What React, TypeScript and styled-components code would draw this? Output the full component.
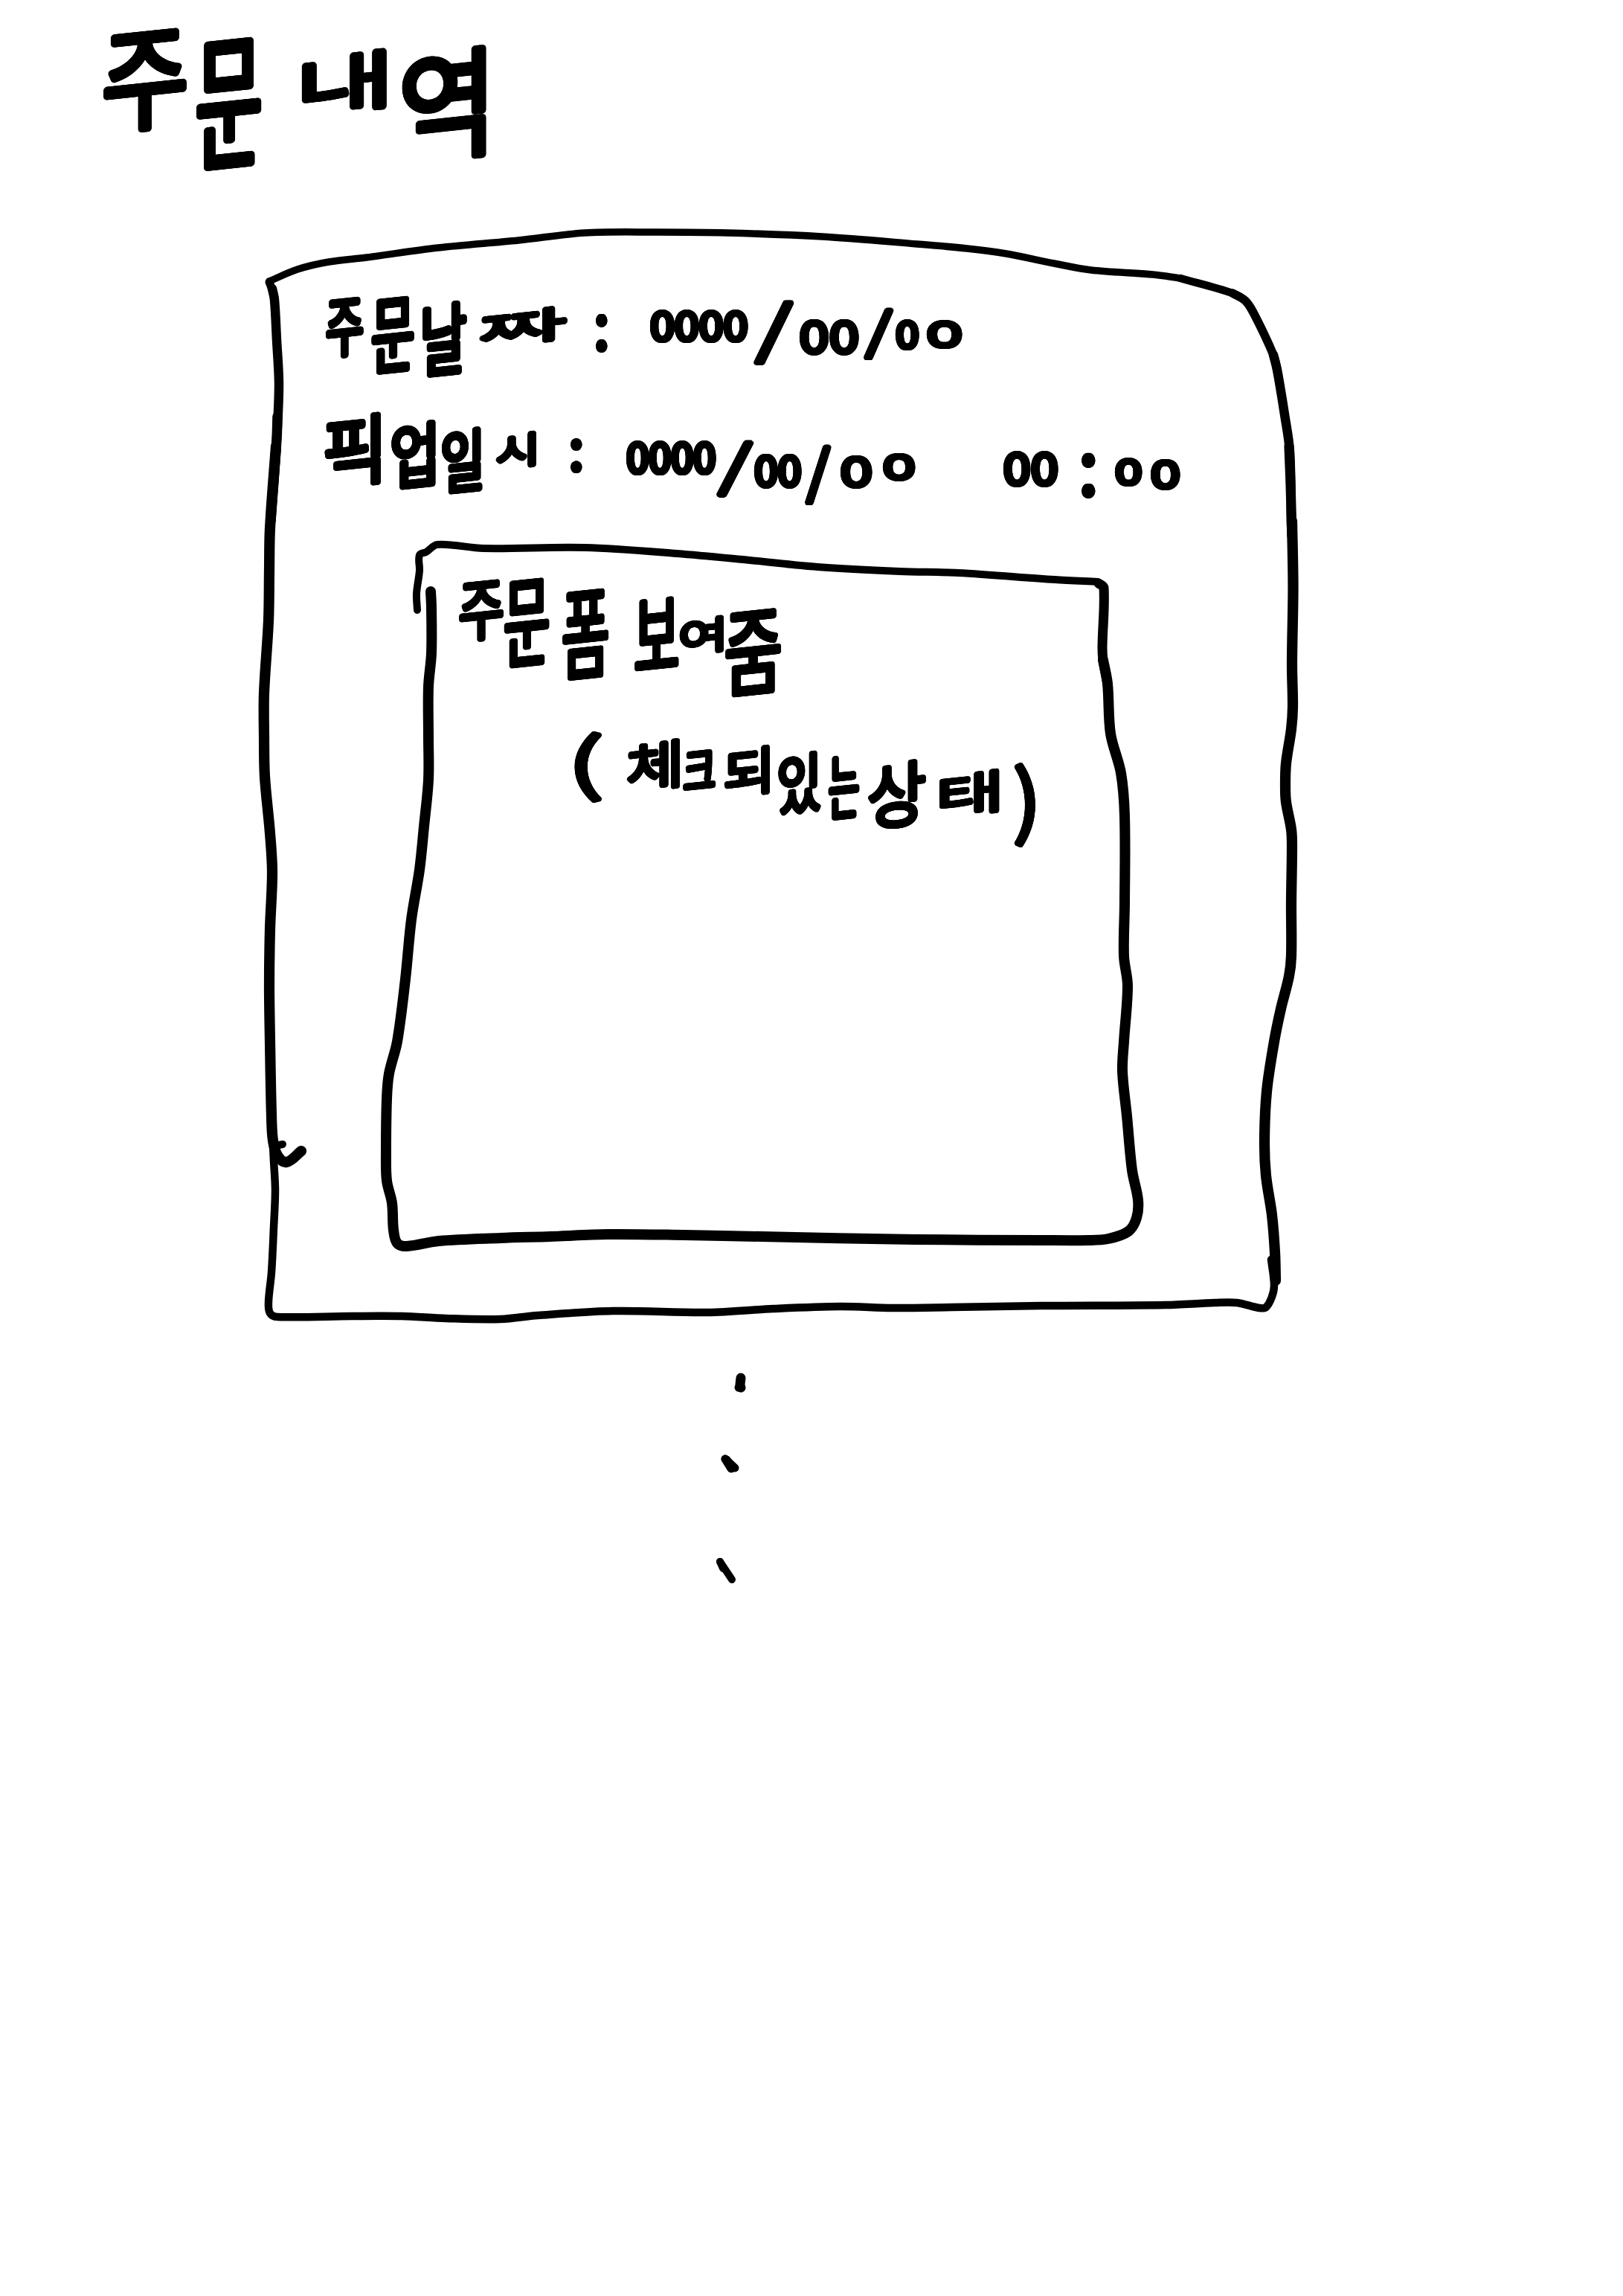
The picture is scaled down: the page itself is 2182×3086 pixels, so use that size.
import React from "react";
import styled, { createGlobalStyle } from "styled-components";

const INK = "#000";
const FACE = '"Noto Sans CJK KR", "Noto Sans", sans-serif';

const GlobalStyle = createGlobalStyle`
  * { box-sizing: border-box; }
  body { margin: 0; background: #fff; color: ${INK}; font-family: ${FACE}; }
`;

/* ---------- lettering ---------- */

type Mark = { text: string; gap: number; drop: number; w: number; h: number };

const m = (text: string, gap: number, drop: number, w: number, h: number): Mark => ({
  text, gap, drop, w, h,
});

const pen = document.createElement("canvas").getContext("2d")!;

const TILT = 6;
const RISE = Math.tan((TILT * Math.PI) / 180);
const isHangul = (text: string) => /[가-힣]/.test(text);

/* Scales a piece of text so that its ink fills a w x h box, then rounds it
   out to the nib of a marker with a ring of unblurred shadows. */
function fitInk(text: string, w: number, h: number, nib: number) {
  pen.font = `400 100px ${FACE}`;
  const t = pen.measureText(text);
  const left = -t.actualBoundingBoxLeft;
  const inkW = t.actualBoundingBoxRight - left;
  const inkH = t.actualBoundingBoxAscent + t.actualBoundingBoxDescent;
  const k = Math.sqrt((w * h) / (inkW * inkH));
  const sx = w / (inkW * k);
  const sy = h / (inkH * k);
  const size = 100 * k;
  const up = t.fontBoundingBoxAscent * k;
  const down = t.fontBoundingBoxDescent * k;
  const baseline = (size - (up + down)) / 2 + up;
  const top = baseline - t.actualBoundingBoxAscent * k;
  const ring = (r: number, n: number) =>
    Array.from({ length: n }, (_, i) => {
      const a = (i / n) * Math.PI * 2;
      return `${((Math.cos(a) * r) / sx).toFixed(2)}px ${((Math.sin(a) * r) / sy).toFixed(2)}px 0 ${INK}`;
    });
  return {
    fontSize: size,
    textShadow: [...ring(nib, 20), ...ring(nib / 2, 8)].join(", "),
    transform: `translate(${-left * k * sx}px, ${-top * sy}px) scale(${sx}, ${sy})`,
  };
}

const Cell = styled.span<{ $mark: Mark; $nib: number; $lift: number }>`
  flex: none;
  width: ${(p) => p.$mark.w}px;
  height: ${(p) => p.$mark.h}px;
  margin-left: ${(p) => p.$mark.gap}px;
  margin-top: ${(p) => p.$mark.drop}px;
  padding: ${(p) => p.$nib + p.$lift / 2}px ${(p) => p.$nib}px;
  transform: skewY(${(p) => (p.$lift ? -TILT : 0)}deg);
`;

const Letter = styled.span`
  display: block;
  width: max-content;
  line-height: 1;
  font-weight: 400;
  white-space: nowrap;
  transform-origin: 0 0;
`;

const Line = styled.div<{ $height: number; $indent?: number; $after?: number }>`
  display: flex;
  align-items: flex-start;
  height: ${(p) => p.$height}px;
  margin-left: ${(p) => p.$indent ?? 0}px;
  margin-bottom: ${(p) => p.$after ?? 0}px;
`;

function Marks({ items, nib }: { items: Mark[]; nib: number }) {
  return (
    <>
      {items.map((it, i) => {
        const lift = isHangul(it.text) ? it.w * RISE : 0;
        return (
          <Cell key={i} $mark={it} $nib={nib} $lift={lift}>
            <Letter style={fitInk(it.text, it.w - nib * 2, it.h - nib * 2 - lift, nib)}>
              {it.text}
            </Letter>
          </Cell>
        );
      })}
    </>
  );
}

const title = [
  m("주", 0, 0, 112, 151), m("문", 12, 13, 88, 185),
  m("내", 54, 28, 115, 97), m("역", 20, 23, 114, 168),
];
const orderDate = [
  m("주", 0, 2, 51, 88), m("문", 10, 0, 58, 109), m("날", 11, 6, 60, 108),
  m("짜", 15, 13, 121, 62), m(":", 37, 26, 16, 52),
  m("0000", 57, 20, 132, 45), m("/", 7, 7, 55, 88), m("00", 7, 33, 80, 49),
  m("/", 6, 18, 41, 71), m("0", 2, 34, 32, 41), m("0", 10, 35, 48, 38),
];
const pickupTime = [
  m("픽", 0, 0, 77, 109), m("업", 13, 11, 60, 98), m("일", 8, 20, 55, 95),
  m("시", 17, 27, 55, 55), m(":", 46, 38, 16, 47),
  m("0000", 59, 41, 121, 47), m("/", 0, 40, 51, 77), m("00", 0, 58, 64, 47),
  m("/", 4, 46, 36, 82), m("0", 12, 60, 43, 45), m("0", 14, 58, 44, 37),
  m("00", 118, 54, 74, 49), m(":", 31, 57, 19, 61),
  m("0", 26, 64, 37, 38), m("0", 11, 65, 40, 42),
];
const formNote = [
  m("주", 0, 2, 60, 90), m("문", 0, 0, 61, 125), m("폼", 18, 15, 62, 127),
  m("보", 35, 25, 59, 104), m("여", 1, 51, 60, 58), m("줌", 2, 40, 75, 124),
];
const stateNote = [
  m("(", 0, 0, 38, 97), m("체", 32, 10, 72, 77), m("크", 4, 24, 44, 58),
  m("되", 11, 18, 62, 75), m("있", 11, 25, 58, 92), m("는", 9, 31, 42, 92),
  m("상", 11, 36, 79, 101), m("태", 17, 50, 81, 70), m(")", 20, 43, 29, 115),
];

/* ---------- pen strokes ---------- */

type Pt = [number, number];

/* Smooth curve through every point. */
function curve(p: Pt[]) {
  let d = `M${p[0][0]} ${p[0][1]}`;
  for (let i = 0; i < p.length - 1; i++) {
    const a = p[i - 1] ?? p[i];
    const b = p[i];
    const c = p[i + 1];
    const e = p[i + 2] ?? c;
    const reach = Math.hypot(c[0] - b[0], c[1] - b[1]) * 0.33;
    const hb = reach / (Math.hypot(c[0] - a[0], c[1] - a[1]) || 1);
    const hc = reach / (Math.hypot(e[0] - b[0], e[1] - b[1]) || 1);
    d += `C${b[0] + (c[0] - a[0]) * hb} ${b[1] + (c[1] - a[1]) * hb} ${c[0] - (e[0] - b[0]) * hc} ${c[1] - (e[1] - b[1]) * hc} ${c[0]} ${c[1]}`;
  }
  return d;
}

const Drawing = styled.svg`
  position: absolute;
  inset: 0;
  width: 100%;
  height: 100%;
  fill: none;
  stroke: ${INK};
  stroke-linecap: round;
  stroke-linejoin: round;
`;

type Stroke = { width: number; points: Pt[] };

function Sketch({ box, strokes }: { box: string; strokes: Stroke[] }) {
  return (
    <Drawing viewBox={box} aria-hidden="true">
      {strokes.map((s, i) => (
        <path key={i} d={curve(s.points)} strokeWidth={s.width} />
      ))}
    </Drawing>
  );
}

const cardStrokes: Stroke[] = [
  { width: 9.5, points: [[362, 378], [400, 362], [442, 352], [493, 346], [589, 333], [697, 323], [786, 313], [882, 312], [978, 313], [1105, 318], [1233, 328], [1300, 334], [1353, 341], [1417, 354], [1467, 363], [1550, 369], [1587, 374]] },
  { width: 10.5, points: [[1587, 374], [1657, 394], [1674, 404], [1685, 420]] },
  { width: 11.5, points: [[1657, 394], [1674, 404], [1685, 420], [1712, 477], [1717, 497]] },
  { width: 12.5, points: [[1712, 477], [1717, 497], [1727, 557], [1734, 607], [1736, 707]] },
  { width: 13.2, points: [[1733, 600], [1735, 650], [1737, 720]] },
  { width: 14.2, points: [[1737, 700], [1738.5, 789], [1737, 892], [1738, 950], [1736, 980], [1729, 1026], [1728, 1057], [1729, 1078], [1736, 1115], [1737, 1137], [1736, 1213], [1736, 1285], [1733, 1312], [1722, 1356], [1713, 1400], [1703, 1467], [1700, 1533], [1702, 1580], [1710, 1633], [1714, 1683], [1715, 1721]] },
  { width: 10.5, points: [[1709, 1693], [1713, 1727], [1710, 1743], [1702, 1757], [1693, 1758], [1663, 1751], [1633, 1751], [1567, 1754], [1400, 1755], [1280, 1757], [1200, 1758], [1130, 1756], [1040, 1759], [952, 1764], [824, 1762], [723, 1768], [673, 1773], [600, 1772], [540, 1769], [473, 1769], [373, 1770], [363, 1765], [361, 1750], [365, 1710], [368, 1650], [370, 1600], [368, 1560], [367, 1540]] },
  { width: 11, points: [[362, 379], [366, 390], [369, 400]] },
  { width: 12.5, points: [[366, 388], [369, 403], [372, 457], [375, 517], [372, 590], [364, 700]] },
  { width: 13.5, points: [[373, 560], [372, 590], [364, 700]] },
  { width: 14.2, points: [[371, 600], [363, 710], [362, 767], [361, 834], [355, 932], [355, 990], [356, 1044], [363, 1120], [366, 1173], [363, 1249], [362, 1325], [363, 1400], [365, 1500], [367, 1533], [373, 1553], [385, 1562], [405, 1547]] },
  { width: 10, points: [[370, 1540], [380, 1538]] },
];

const formStrokes: Stroke[] = [
  { width: 10, points: [[561, 820], [560, 798], [564, 767], [564, 746], [573, 742], [588, 732], [650, 737], [787, 736], [910, 744], [1008, 753], [1099, 762], [1210, 768], [1288, 770], [1418, 779], [1476, 782]] },
  { width: 13, points: [[1477, 784], [1484, 790], [1482, 870], [1483, 887], [1489, 919]] },
  { width: 14, points: [[1483, 887], [1489, 919], [1493, 986], [1507, 1039], [1512, 1097], [1512, 1213], [1511, 1285], [1516, 1325], [1511, 1400], [1509, 1440], [1515, 1500], [1522, 1573], [1530, 1613], [1528, 1637], [1517, 1655], [1490, 1665], [1463, 1667], [1400, 1667], [1230, 1666], [1023, 1662], [920, 1660], [817, 1659], [740, 1662], [673, 1664], [590, 1668], [547, 1675], [534, 1671], [529, 1653], [527, 1617], [520, 1587], [519, 1550], [520, 1477], [523, 1443], [534, 1400], [545, 1316], [553, 1236], [564, 1169], [570, 1111], [576, 1048], [576, 990], [576, 923], [580, 878], [580, 816], [579, 795]] },
];

const dotStrokes: Stroke[] = [
  { width: 13, points: [[996, 1852], [995, 1862], [996, 1865]] },
  { width: 11, points: [[993, 1865], [996, 1865]] },
  { width: 11, points: [[975, 1961], [983, 1974]] },
  { width: 11, points: [[975, 1961], [988, 1973]] },
  { width: 11, points: [[977, 1962], [985, 1973]] },
  { width: 10, points: [[968, 2099], [984, 2123]] },
  { width: 10, points: [[968, 2099], [972, 2108]] },
];

/* ---------- page ---------- */

const Page = styled.main`
  display: flex;
  flex-direction: column;
  width: 2182px;
  height: 3086px;
  background: #fff;
`;

const Header = styled.h1`
  margin: 0;
  padding: 35px 0 0 139px;
  height: 300px;
  font-size: 100px;
`;

const OrderCard = styled.section`
  position: relative;
  width: 1410px;
  height: 1490px;
  margin-left: 345px;
  padding: 96px 0 0 91px;
`;

const FormPanel = styled.div`
  position: relative;
  width: 1040px;
  height: 970px;
  margin-left: 70px;
  padding: 55px 0 0 111px;
`;

const More = styled.div`
  position: relative;
  width: 60px;
  height: 310px;
  margin: 40px 0 0 950px;
`;

export default function App() {
  return (
    <Page>
      <GlobalStyle />
      <Header>
        <Line as="span" $height={198}>
          <Marks items={title} nib={3.8} />
        </Line>
      </Header>
      <OrderCard>
        <Sketch box="345 300 1410 1490" strokes={cardStrokes} />
        <Line $height={115} $indent={2} $after={41}>
          <Marks items={orderDate} nib={3.1} />
        </Line>
        <Line $height={128} $after={40}>
          <Marks items={pickupTime} nib={3.1} />
        </Line>
        <FormPanel>
          <Sketch box="506 720 1040 970" strokes={formStrokes} />
          <Line $height={165} $after={42}>
            <Marks items={formNote} nib={2.7} />
          </Line>
          <Line $height={158} $indent={155}>
            <Marks items={stateNote} nib={2.7} />
          </Line>
        </FormPanel>
      </OrderCard>
      <More>
        <Sketch box="950 1830 60 310" strokes={dotStrokes} />
      </More>
    </Page>
  );
}
